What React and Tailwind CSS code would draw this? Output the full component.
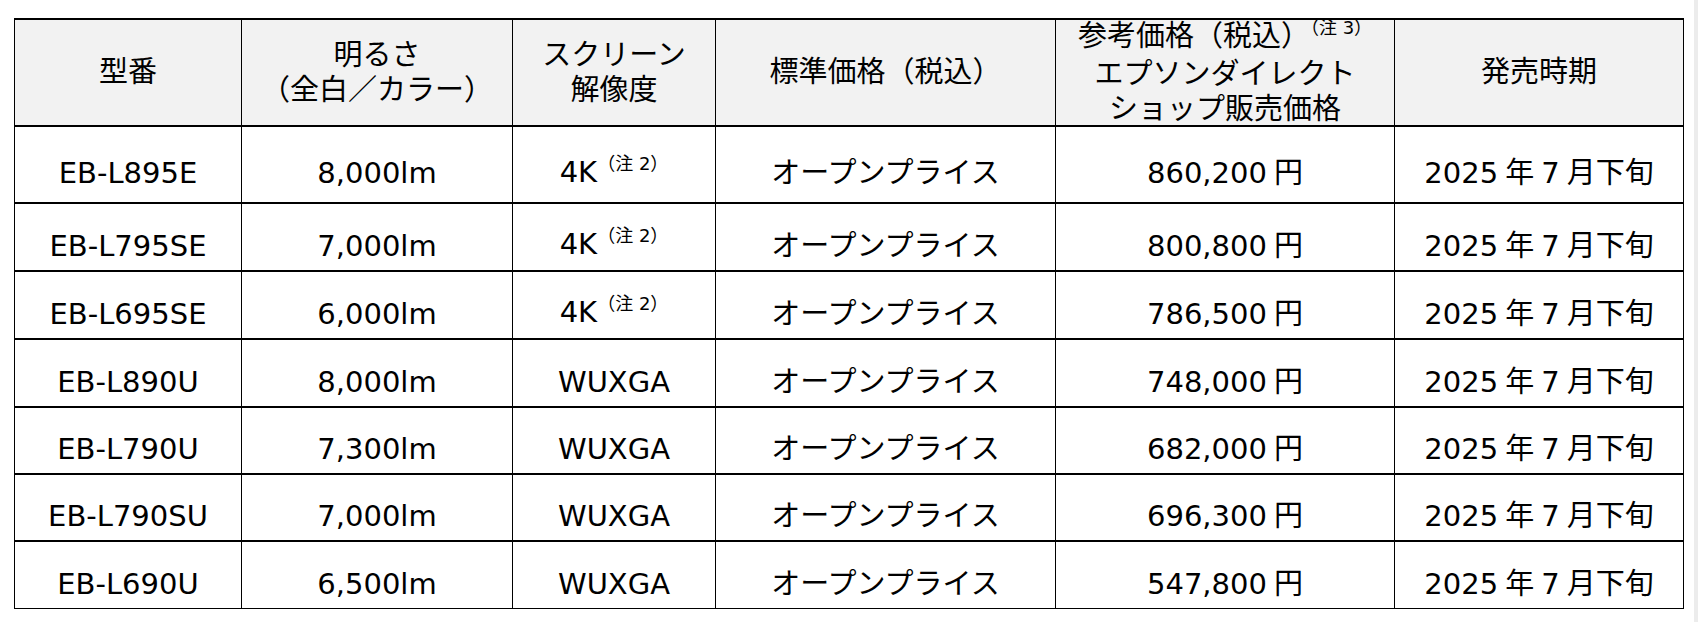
const COLS = 'grid-cols-[227px_271px_203px_340px_339px_289px]';

const ROWS = [
  { model: 'EB-L895E', lm: '8,000lm', res: '4K', note: true, price: '860,200', h: 'h-[77px]' },
  { model: 'EB-L795SE', lm: '7,000lm', res: '4K', note: true, price: '800,800', h: 'h-[68px]' },
  { model: 'EB-L695SE', lm: '6,000lm', res: '4K', note: true, price: '786,500', h: 'h-[68px]' },
  { model: 'EB-L890U', lm: '8,000lm', res: 'WUXGA', note: false, price: '748,000', h: 'h-[68px]' },
  { model: 'EB-L790U', lm: '7,300lm', res: 'WUXGA', note: false, price: '682,000', h: 'h-[67px]' },
  { model: 'EB-L790SU', lm: '7,000lm', res: 'WUXGA', note: false, price: '696,300', h: 'h-[67px]' },
  { model: 'EB-L690U', lm: '6,500lm', res: 'WUXGA', note: false, price: '547,800', h: 'h-[67px]' },
];

function Note({ n }) {
  return (
    <span className="relative -top-[12px] text-[18px]">（注 {n}）</span>
  );
}

function HeadCell({ children }) {
  return (
    <div className="flex h-[107px] flex-col items-center justify-center border-r border-b-2 border-black bg-[#f2f2f2] text-center leading-[35px]">
      {children}
    </div>
  );
}

function Cell({ children, h, last }) {
  return (
    <div
      className={`flex items-center justify-center border-r border-black pt-[18px] leading-[35px] whitespace-nowrap ${h} ${last ? 'border-b' : 'border-b-2'}`}
    >
      {children}
    </div>
  );
}

export default function App() {
  return (
    <div className="flex h-[622px] w-full bg-white text-black font-['DejaVu_Sans','Noto_Sans_CJK_JP',sans-serif] text-[29px]">
      <div className="flex-1 pl-[14px] pt-[18px]">
        <div className={`grid w-fit ${COLS} border-l border-t-2 border-black`}>
          {/* header */}
          <HeadCell>型番</HeadCell>
          <HeadCell>
            <span>明るさ</span>
            <span>（全白／カラー）</span>
          </HeadCell>
          <HeadCell>
            <span>スクリーン</span>
            <span>解像度</span>
          </HeadCell>
          <HeadCell>標準価格（税込）</HeadCell>
          <HeadCell>
            <span className="whitespace-nowrap">参考価格（税込）<Note n={3} /></span>
            <span>エプソンダイレクト</span>
            <span>ショップ販売価格</span>
          </HeadCell>
          <HeadCell>発売時期</HeadCell>

          {/* rows */}
          {ROWS.map((r, i) => {
            const last = i === ROWS.length - 1;
            return [
              <Cell key={r.model + 'a'} h={r.h} last={last}>{r.model}</Cell>,
              <Cell key={r.model + 'b'} h={r.h} last={last}>{r.lm}</Cell>,
              <Cell key={r.model + 'c'} h={r.h} last={last}>
                <span>
                  {r.res}
                  {r.note && <Note n={2} />}
                </span>
              </Cell>,
              <Cell key={r.model + 'd'} h={r.h} last={last}>オープンプライス</Cell>,
              <Cell key={r.model + 'e'} h={r.h} last={last}>
                <span>
                  {r.price}
                  <span className="ml-[7px]">円</span>
                </span>
              </Cell>,
              <Cell key={r.model + 'f'} h={r.h} last={last}>
                <span>
                  2025<span className="ml-[7px]">年</span>
                  <span className="ml-[7px]">7</span>
                  <span className="ml-[7px]">月下旬</span>
                </span>
              </Cell>,
            ];
          })}
        </div>
      </div>
      <div className="w-[4px] bg-[#ececec]" />
    </div>
  );
}
